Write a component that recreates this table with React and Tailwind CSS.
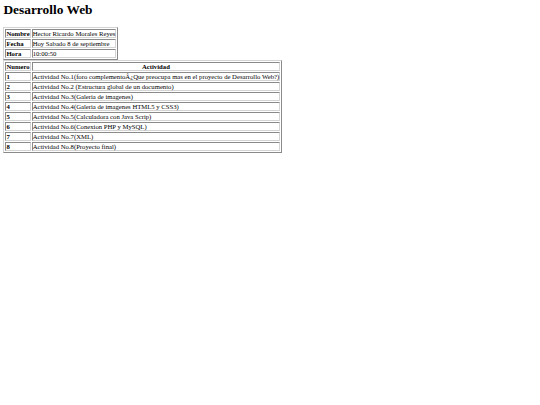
const datos = [
  ["Nombre", "Hector Ricardo Morales Reyes"],
  ["Fecha", "Hoy Sabado 8 de septiembre"],
  ["Hora", "10:00:50"],
];

const actividades = [
  "Actividad No.1(foro complementoÂ¿Que preocupa mas en el proyecto de Desarrollo Web?)",
  "Actividad No.2 (Estructura global de un documento)",
  "Actividad No.3(Galeria de imagenes)",
  "Actividad No.4(Galeria de imagenes HTML5 y CSS3)",
  "Actividad No.5(Calculadora con Java Scrip)",
  "Actividad No.6(Conexion PHP y MySQL)",
  "Actividad No.7(XML)",
  "Actividad No.8(Proyecto final)",
];

// viejo estilo de tabla con border="1"
const tableCls =
  "border-separate border-spacing-[1px] border border-t-[#d4d4d4] border-l-[#d4d4d4] border-b-[#8a8a8a] border-r-[#8a8a8a] text-[6.7px] leading-[7px]";
const cellCls =
  "border border-t-[#8a8a8a] border-l-[#8a8a8a] border-b-[#d4d4d4] border-r-[#d4d4d4] p-0 align-middle";

const App = () => {
  return (
    <div className="min-h-screen bg-white px-[3.4px] pt-[2px] text-black font-['Liberation_Serif',serif]">
      <h1 className="mb-[10px] text-[13.4px] leading-[15px] font-bold">Desarrollo Web</h1>

      <table className={tableCls}>
        <tbody>
          {datos.map(([label, value]) => (
            <tr key={label}>
              <th className={`${cellCls} text-left font-bold`}>{label}</th>
              <td className={cellCls}>{value}</td>
            </tr>
          ))}
        </tbody>
      </table>

      <table className={tableCls}>
        <tbody>
          <tr>
            <th className={`${cellCls} font-bold`}>Numero</th>
            <th className={`${cellCls} font-bold`}>Actividad</th>
          </tr>
          {actividades.map((act, i) => (
            <tr key={i}>
              <th className={`${cellCls} text-left font-bold`}>{i + 1}</th>
              <td className={cellCls}>{act}</td>
            </tr>
          ))}
        </tbody>
      </table>
    </div>
  );
};

export default App;
